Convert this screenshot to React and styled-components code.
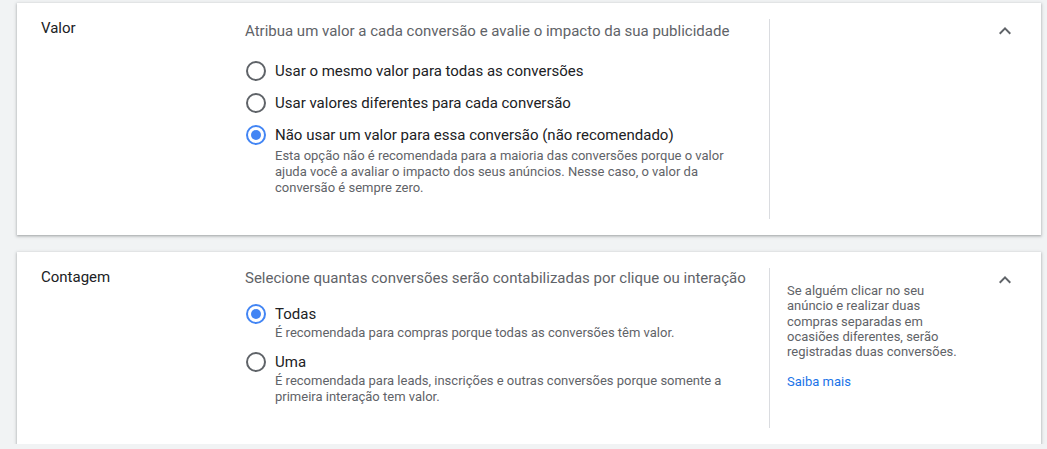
import React from 'react';
import styled, { createGlobalStyle } from 'styled-components';

const GlobalStyle = createGlobalStyle`
  body {
    margin: 0;
    background: #f1f3f4;
    font-family: Roboto, "Noto Sans", Arial, sans-serif;
    -webkit-font-smoothing: antialiased;
  }
`;

const Page = styled.div`
  display: flex;
  flex-direction: column;
  gap: 17px;
  padding: 3px 6px 0 17px;
`;

const Card = styled.section`
  display: grid;
  grid-template-columns: 204px 524px 1px 1fr auto;
  padding: 16px 24px 16px 24px;
  background: #fff;
  box-shadow: 0 1px 2px rgba(60, 64, 67, 0.3), 0 1px 3px 1px rgba(60, 64, 67, 0.15);
`;

const Title = styled.h2`
  margin: -1px 0 0;
  font-size: 15px;
  font-weight: 400;
  line-height: 20px;
  color: #202124;
`;

const Main = styled.div`
  padding: ${(p) => p.$top}px 24px 23px 0;
`;

const Lead = styled.p`
  margin: 0 0 ${(p) => p.$gap}px;
  font-size: 15px;
  line-height: 20px;
  color: #5f6368;
  white-space: nowrap;
`;

const Options = styled.div`
  display: flex;
  flex-direction: column;
  gap: ${(p) => p.$gap}px;
`;

const Option = styled.label`
  display: grid;
  grid-template-columns: 20px 1fr;
  column-gap: 10px;
  align-items: start;
  cursor: pointer;
`;

const Ring = styled.span`
  box-sizing: border-box;
  width: 20px;
  height: 20px;
  margin-left: 1px;
  border-radius: 50%;
  border: 2px solid ${(p) => (p.$on ? '#4285f4' : '#5f6368')};
  display: flex;
  align-items: center;
  justify-content: center;

  &::after {
    content: '';
    width: 10px;
    height: 10px;
    border-radius: 50%;
    background: #4285f4;
    display: ${(p) => (p.$on ? 'block' : 'none')};
  }
`;

const OptionText = styled.div`
  display: flex;
  flex-direction: column;
  gap: ${(p) => p.$gap}px;
`;

const OptionLabel = styled.span`
  font-size: 15px;
  line-height: 20px;
  color: #202124;
`;

const Hint = styled.span`
  font-size: 13px;
  line-height: 16px;
  color: #5f6368;
`;

const Divider = styled.div`
  background: #dadce0;
`;

const Side = styled.aside`
  padding: 15px 0 0 17px;
  width: 180px;
  font-size: 13px;
  line-height: 15.3px;
  color: #5f6368;
`;

const SideText = styled.p`
  margin: 0 0 15px;
`;

const Link = styled.a`
  color: #1a73e8;
  text-decoration: none;
  line-height: 16px;
`;

const Toggle = styled.button`
  align-self: start;
  width: 24px;
  height: 24px;
  padding: 0;
  border: 0;
  background: none;
  color: #5f6368;
  cursor: pointer;

  svg {
    display: block;
  }
`;

const Chevron = () => (
  <svg width="24" height="24" viewBox="0 0 24 24" fill="currentColor">
    <path d="M12 8l-6 6 1.41 1.41L12 10.83l4.59 4.58L18 14z" />
  </svg>
);

const Radio = ({ on, label, hint, gap }) => (
  <Option>
    <Ring $on={on} />
    <OptionText $gap={gap}>
      <OptionLabel>{label}</OptionLabel>
      {hint && <Hint>{hint}</Hint>}
    </OptionText>
  </Option>
);

export default function App() {
  return (
    <>
      <GlobalStyle />
      <Page>
        <Card>
          <Title>Valor</Title>
          <Main $top={2}>
            <Lead $gap={20}>Atribua um valor a cada conversão e avalie o impacto da sua publicidade</Lead>
            <Options $gap={12}>
              <Radio label="Usar o mesmo valor para todas as conversões" />
              <Radio label="Usar valores diferentes para cada conversão" />
              <Radio
                on
                gap={3}
                label="Não usar um valor para essa conversão (não recomendado)"
                hint="Esta opção não é recomendada para a maioria das conversões porque o valor ajuda você a avaliar o impacto dos seus anúncios. Nesse caso, o valor da conversão é sempre zero."
              />
            </Options>
          </Main>
          <Divider />
          <div />
          <Toggle aria-label="Recolher">
            <Chevron />
          </Toggle>
        </Card>

        <Card>
          <Title>Contagem</Title>
          <Main $top={0}>
            <Lead $gap={16}>Selecione quantas conversões serão contabilizadas por clique ou interação</Lead>
            <Options $gap={11}>
              <Radio
                on
                gap={1}
                label="Todas"
                hint="É recomendada para compras porque todas as conversões têm valor."
              />
              <Radio
                gap={1}
                label="Uma"
                hint="É recomendada para leads, inscrições e outras conversões porque somente a primeira interação tem valor."
              />
            </Options>
          </Main>
          <Divider />
          <Side>
            <SideText>
              Se alguém clicar no seu anúncio e realizar duas compras separadas em ocasiões diferentes, serão registradas duas conversões.
            </SideText>
            <Link href="#">Saiba mais</Link>
          </Side>
          <Toggle aria-label="Recolher">
            <Chevron />
          </Toggle>
        </Card>
      </Page>
    </>
  );
}
